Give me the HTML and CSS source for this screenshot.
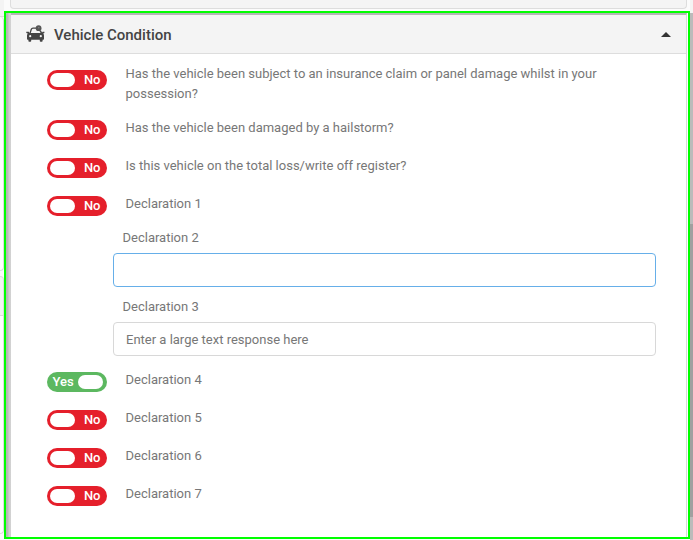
FILE: index.html
```html
<!DOCTYPE html>
<html lang="en">
<head>
  <meta charset="UTF-8" />
  <meta name="viewport" content="width=device-width, initial-scale=1.0"/>
  <title>Vehicle Condition</title>
  <link rel="stylesheet" href="styles.css">
</head>
<body>

  <div class="page">
    <!-- Edge of the left column -->
    <div class="side-left">
      <div class="side-card side-top"></div>
      <div class="side-card side-middle"></div>
      <div class="side-card side-small"></div>
      <div class="side-card side-bottom"></div>
    </div>

    <div class="main">
      <div class="previous-panel"></div>

      <div class="highlight">
        <div class="panel">
          <div class="panel-header">
            <svg class="car-icon" width="20" height="18" viewBox="0 0 20 18">
              <path d="M4 8.4 5.3 4.3Q5.700 3.2 7 3.2h4" fill="none" stroke="#444" stroke-width="1.3"/>
              <path d="M14.2 5.6 15.6 8.4" fill="none" stroke="#444" stroke-width="1.5"/>
              <circle cx="12.6" cy="3.2" r="2.9" fill="#555"/>
              <circle cx="12.8" cy="2.8" r="0.7" fill="#888"/>
              <path fill="#444" d="M.3 6.7h2.5l.8 1.2h12.2l.8-1.2h1.8v1.4l-1.2.5q.8.8.8 2V14q0 .8-.8.8h-.6V16q0 .8-.8.8h-1.2q-.8 0-.8-.8v-1.2H5.2V16q0 .8-.8.8H3.2q-.8 0-.8-.8v-1.2h-.6Q1 14.8 1 14v-3.4q0-1.2.8-2L.3 8.1z"/>
              <circle cx="4.2" cy="11.2" r="1.1" fill="#f4f4f4"/>
              <circle cx="14.8" cy="11.2" r="1.1" fill="#f4f4f4"/>
            </svg>
            <h1 class="panel-title">Vehicle Condition</h1>
            <span class="caret"></span>
          </div>

          <div class="panel-body">
            <div class="question tall">
              <div class="toggle"><span class="knob"></span><span class="toggle-text">No</span></div>
              <p class="label">Has the vehicle been subject to an insurance claim or panel damage whilst in your possession?</p>
            </div>
            <div class="question">
              <div class="toggle"><span class="knob"></span><span class="toggle-text">No</span></div>
              <p class="label">Has the vehicle been damaged by a hailstorm?</p>
            </div>
            <div class="question">
              <div class="toggle"><span class="knob"></span><span class="toggle-text">No</span></div>
              <p class="label">Is this vehicle on the total loss/write off register?</p>
            </div>
            <div class="question">
              <div class="toggle"><span class="knob"></span><span class="toggle-text">No</span></div>
              <p class="label">Declaration 1</p>
            </div>

            <div class="fields">
              <div class="field">
                <label class="field-label" for="declaration2">Declaration 2</label>
                <input class="field-input active" id="declaration2" type="text" />
              </div>
              <div class="field">
                <label class="field-label" for="declaration3">Declaration 3</label>
                <input class="field-input" id="declaration3" type="text" placeholder="Enter a large text response here" />
              </div>
            </div>

            <div class="question">
              <div class="toggle on"><span class="toggle-text">Yes</span><span class="knob"></span></div>
              <p class="label">Declaration 4</p>
            </div>
            <div class="question">
              <div class="toggle"><span class="knob"></span><span class="toggle-text">No</span></div>
              <p class="label">Declaration 5</p>
            </div>
            <div class="question">
              <div class="toggle"><span class="knob"></span><span class="toggle-text">No</span></div>
              <p class="label">Declaration 6</p>
            </div>
            <div class="question">
              <div class="toggle"><span class="knob"></span><span class="toggle-text">No</span></div>
              <p class="label">Declaration 7</p>
            </div>
          </div>
        </div>
      </div>
    </div>

    <div class="side-right">
      <div class="scroll-thumb"></div>
    </div>
  </div>

</body>
</html>
```

FILE: styles.css
```css
* {
  margin: 0;
  padding: 0;
  box-sizing: border-box;
}

body {
  font-family: Roboto, sans-serif;
  font-size: 13px;
  line-height: 20px;
  color: #777;
  background-color: #fbfbfb;
  overflow: hidden;
}

.page {
  display: flex;
  height: 540px;
}

.side-left {
  width: 4px;
  display: flex;
  flex-direction: column;
}

.side-card {
  border: 1px solid #ddd;
  border-left: none;
  border-radius: 0 4px 4px 0;
  background-color: #fff;
}

.side-top {
  height: 17px;
  border-top: none;
  border-right: none;
  border-radius: 0;
  background-color: #f4f4f4;
}

.side-middle {
  height: 254px;
  border-top: none;
}

.side-small {
  height: 40px;
  margin-top: 5px;
  border-bottom-right-radius: 0;
  background-color: #f4f4f4;
}

.side-bottom {
  height: 218px;
  border-top: none;
  border-top-right-radius: 0;
}

.main {
  width: 686px;
  display: flex;
  flex-direction: column;
}

.previous-panel {
  height: 9px;
  margin: 0 3px 2px 6px;
  border: 1px solid #ddd;
  border-top: none;
  border-radius: 0 0 4px 4px;
  background-color: #f4f4f4;
}

.highlight {
  height: 528px;
  padding: 0 1px 0 5px;
  border: 2px solid #0f0;
  background: linear-gradient(to right, #b5b5b5, #bcbcbc 2px, #d0d0d0 3px, #d2d2d2 5px, #fff 5px);
}

.panel {
  height: 524px;
  border-top: 2px solid #b5b5b5;
  border-right: 1px solid #d8d8d8;
  background-color: #fff;
}

.panel-header {
  display: flex;
  align-items: center;
  height: 39px;
  padding: 0 15px;
  border-bottom: 1px solid #ddd;
  background-color: #f4f4f4;
}

.car-icon {
  margin-top: -1px;
}

.panel-title {
  margin: 2px 0 0 8px;
  font-size: 15px;
  font-weight: 500;
  color: #444;
}

.caret {
  margin-left: auto;
  border: 5px solid transparent;
  border-top: none;
  border-bottom-color: #333;
}

.panel-body {
  padding: 10px 30px 0 36px;
}

.question {
  display: flex;
  align-items: flex-start;
  margin-bottom: 18px;
}

.toggle {
  display: flex;
  align-items: center;
  justify-content: space-between;
  flex: none;
  width: 60px;
  height: 20px;
  margin: 2px 18.5px -2px 0;
  padding: 0 6.5px 0 3px;
  border-radius: 10px;
  font-weight: 500;
  color: #fff;
  background-color: #e51f2b;
}

/* Two-line question */
.tall {
  margin-bottom: 14px;
}

.tall .toggle {
  margin-top: 6px;
}

.toggle.on {
  padding: 0 4px 0 5.5px;
  background-color: #5cb860;
}

.knob {
  width: 25px;
  height: 14px;
  border-radius: 7px;
  background-color: #fff;
}

.label {
  width: 500px;
}

.fields {
  margin: -4px 0 14px 66px;
}

.field {
  margin-bottom: 10px;
}

.field-label {
  display: block;
  margin: 0 0 5px 9.5px;
}

.field-input {
  display: block;
  width: 543px;
  height: 34px;
  padding: 0 12px;
  border: 1px solid #d8d8d8;
  border-radius: 4px;
  font: inherit;
  color: #777;
  background-color: #fff;
}

.field-input.active {
  border-color: #66afe9;
}

.field-input::placeholder {
  color: #777;
}

.side-right {
  width: 3px;
  padding-top: 13px;
  background-color: #f4f4f4;
}

.scroll-thumb {
  height: 527px;
  background: linear-gradient(#bbb 211px, #a0a0a0 211px, #a0a0a0 504px, #bbb 504px);
}
```
